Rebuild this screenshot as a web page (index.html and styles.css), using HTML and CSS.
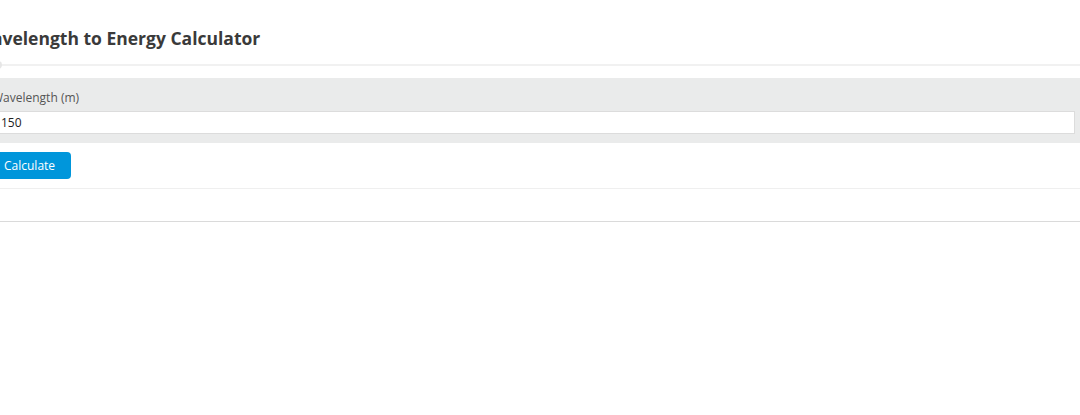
FILE: index.html
```html
<!DOCTYPE html>
<html>
<head>
<meta charset="utf-8">
<link rel="stylesheet" href="styles.css">
</head>
<body>
<div class="calc">
  <div class="calc-head">
    <h1 class="calc-title">Wavelength to Energy Calculator</h1>
  </div>
  <div class="calc-rule"><span class="calc-dot"></span></div>
  <div class="calc-fields">
    <label class="calc-label" for="wl">Wavelength (m)</label>
    <input class="calc-input" id="wl" type="text" value="150">
  </div>
  <div class="calc-actions">
    <button class="calc-btn" type="button">Calculate</button>
  </div>
  <div class="calc-result"></div>
</div>
</body>
</html>
```
FILE: styles.css
```css
html, body {
  margin: 0;
  padding: 0;
  background: #fff;
}
body {
  font-family: "Open Sans", "Noto Sans", sans-serif;
  overflow: hidden;
}
.calc {
  margin-left: -10px;
  width: 1090px;
}
.calc-head {
  padding: 26px 0 0 0;
  height: 38px;
  margin-left: -15px;
}
.calc-title {
  margin: 0;
  font-size: 17.5px;
  line-height: 24px;
  font-weight: 700;
  color: #3a3a3a;
}
.calc-rule {
  position: relative;
  height: 0;
  border-top: 2px solid #f1f1f1;
  margin-bottom: 12px;
}
.calc-dot {
  position: absolute;
  left: 4px;
  top: -5px;
  width: 8px;
  height: 8px;
  border-radius: 50%;
  background: #e6e6e6;
}
.calc-fields {
  background: #eaebeb;
  padding: 10px 5px 9px 6px;
  display: flex;
  flex-direction: column;
  gap: 3px;
}
.calc-label {
  font-size: 12px;
  line-height: 20px;
  color: #555;
  margin-left: -4px;
}
.calc-input {
  font-family: inherit;
  font-size: 12px;
  color: #222;
  height: 23px;
  box-sizing: border-box;
  border: 1px solid #dcdcdc;
  background: #fff;
  padding: 0 4px;
  margin: 0;
  outline: none;
}
.calc-actions {
  padding: 9px 0 9px 0;
  border-bottom: 1px solid #efefef;
}
.calc-btn {
  font-family: inherit;
  font-size: 12px;
  color: #fff;
  background: #0096db;
  border: 0;
  border-radius: 4px;
  height: 27px;
  width: 81px;
  padding: 0 0 0 14px;
  text-align: left;
  cursor: pointer;
}
.calc-result {
  height: 32px;
  border-bottom: 1px solid #dadada;
}
```
